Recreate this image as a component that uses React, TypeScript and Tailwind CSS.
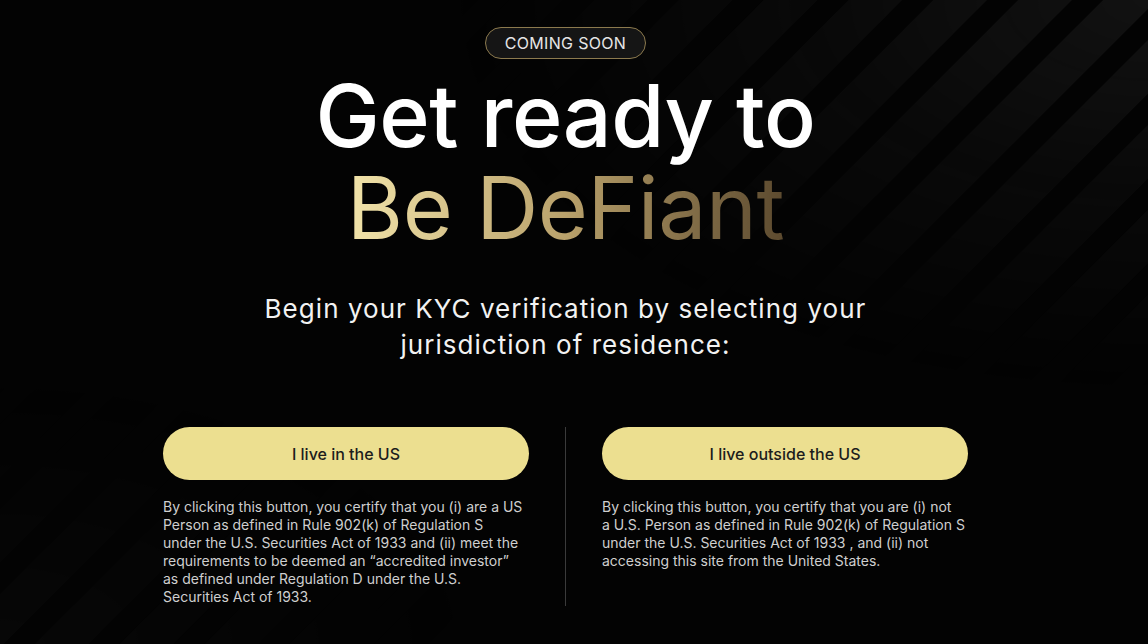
import React from 'react';

const usLines = [
  'By clicking this button, you certify that you (i) are a US',
  'Person as defined in Rule 902(k) of Regulation S',
  'under the U.S. Securities Act of 1933 and (ii) meet the',
  'requirements to be deemed an \u201Caccredited investor\u201D',
  'as defined under Regulation D under the U.S.',
  'Securities Act of 1933.',
];

const nonUsLines = [
  'By clicking this button, you certify that you are (i) not',
  'a U.S. Person as defined in Rule 902(k) of Regulation S',
  'under the U.S. Securities Act of 1933 , and (ii) not',
  'accessing this site from the United States.',
];

// Фоновые диагональные полосы
const Stripes: React.FC = () => (
  <svg className="pointer-events-none absolute inset-0 h-full w-full" aria-hidden="true">
    <defs>
      <pattern id="stripes" width="60" height="60" patternUnits="userSpaceOnUse" patternTransform="rotate(45)">
        <rect x="0" y="0" width="38" height="60" fill="#141414" />
      </pattern>
      <radialGradient id="fadeTR" cx="1" cy="0" r="0.6">
        <stop offset="0" stopColor="#fff" stopOpacity="0.9" />
        <stop offset="0.5" stopColor="#fff" stopOpacity="0.35" />
        <stop offset="1" stopColor="#fff" stopOpacity="0" />
      </radialGradient>
      <radialGradient id="fadeBL" cx="0" cy="1" r="0.4">
        <stop offset="0" stopColor="#fff" stopOpacity="0.25" />
        <stop offset="1" stopColor="#fff" stopOpacity="0" />
      </radialGradient>
      <mask id="stripeMask">
        <rect width="100%" height="100%" fill="url(#fadeTR)" />
        <rect width="100%" height="100%" fill="url(#fadeBL)" />
      </mask>
    </defs>
    <rect width="100%" height="100%" fill="url(#stripes)" mask="url(#stripeMask)" />
  </svg>
);

interface ChoiceProps {
  label: string;
  lines: string[];
}

const Choice: React.FC<ChoiceProps> = ({ label, lines }) => (
  <div className="flex flex-col">
    <button className="h-[53px] w-full rounded-full bg-[#ecdf90] text-[16px] font-medium text-[#1c1c1c]">
      {label}
    </button>
    <p className="mt-[18px] text-[14px] leading-[18px] text-[#cfcfcf]">
      {lines.map((l) => (
        <span key={l} className="block whitespace-nowrap">{l}</span>
      ))}
    </p>
  </div>
);

export default function App() {
  return (
    <div className="relative h-[644px] w-full overflow-hidden bg-[#030303] font-['Inter',sans-serif]">
      <Stripes />
      <main className="relative flex flex-col items-center pr-[17px] pt-[27px]">
        <div className="flex h-[32px] items-center rounded-full border border-[#8c7a4e] bg-[#151515] px-[19px] text-[16px] tracking-[0.02em] text-[#e6e6e6]">
          COMING SOON
        </div>

        <h1 className="mt-[11px] flex flex-col items-center text-[86px] font-medium leading-[92px] tracking-[-0.005em]">
          <span className="text-white">Get ready to</span>
          <span className="bg-linear-to-r from-[#f2e4aa] via-[#b9a16b] to-[#5c4a2f] bg-clip-text font-normal text-transparent">
            Be DeFiant
          </span>
        </h1>

        <p className="mt-[37px] text-center text-[26px] leading-[36px] tracking-[0.04em] text-[#f2f2f2]">
          Begin your KYC verification by selecting your
          <br />
          jurisdiction of residence:
        </p>

        <div className="mt-[64px] grid grid-cols-[366px_1px_366px] gap-x-9">
          <Choice label="I live in the US" lines={usLines} />
          <div className="bg-[#3a3a3a]" />
          <Choice label="I live outside the US" lines={nonUsLines} />
        </div>
      </main>
    </div>
  );
}
